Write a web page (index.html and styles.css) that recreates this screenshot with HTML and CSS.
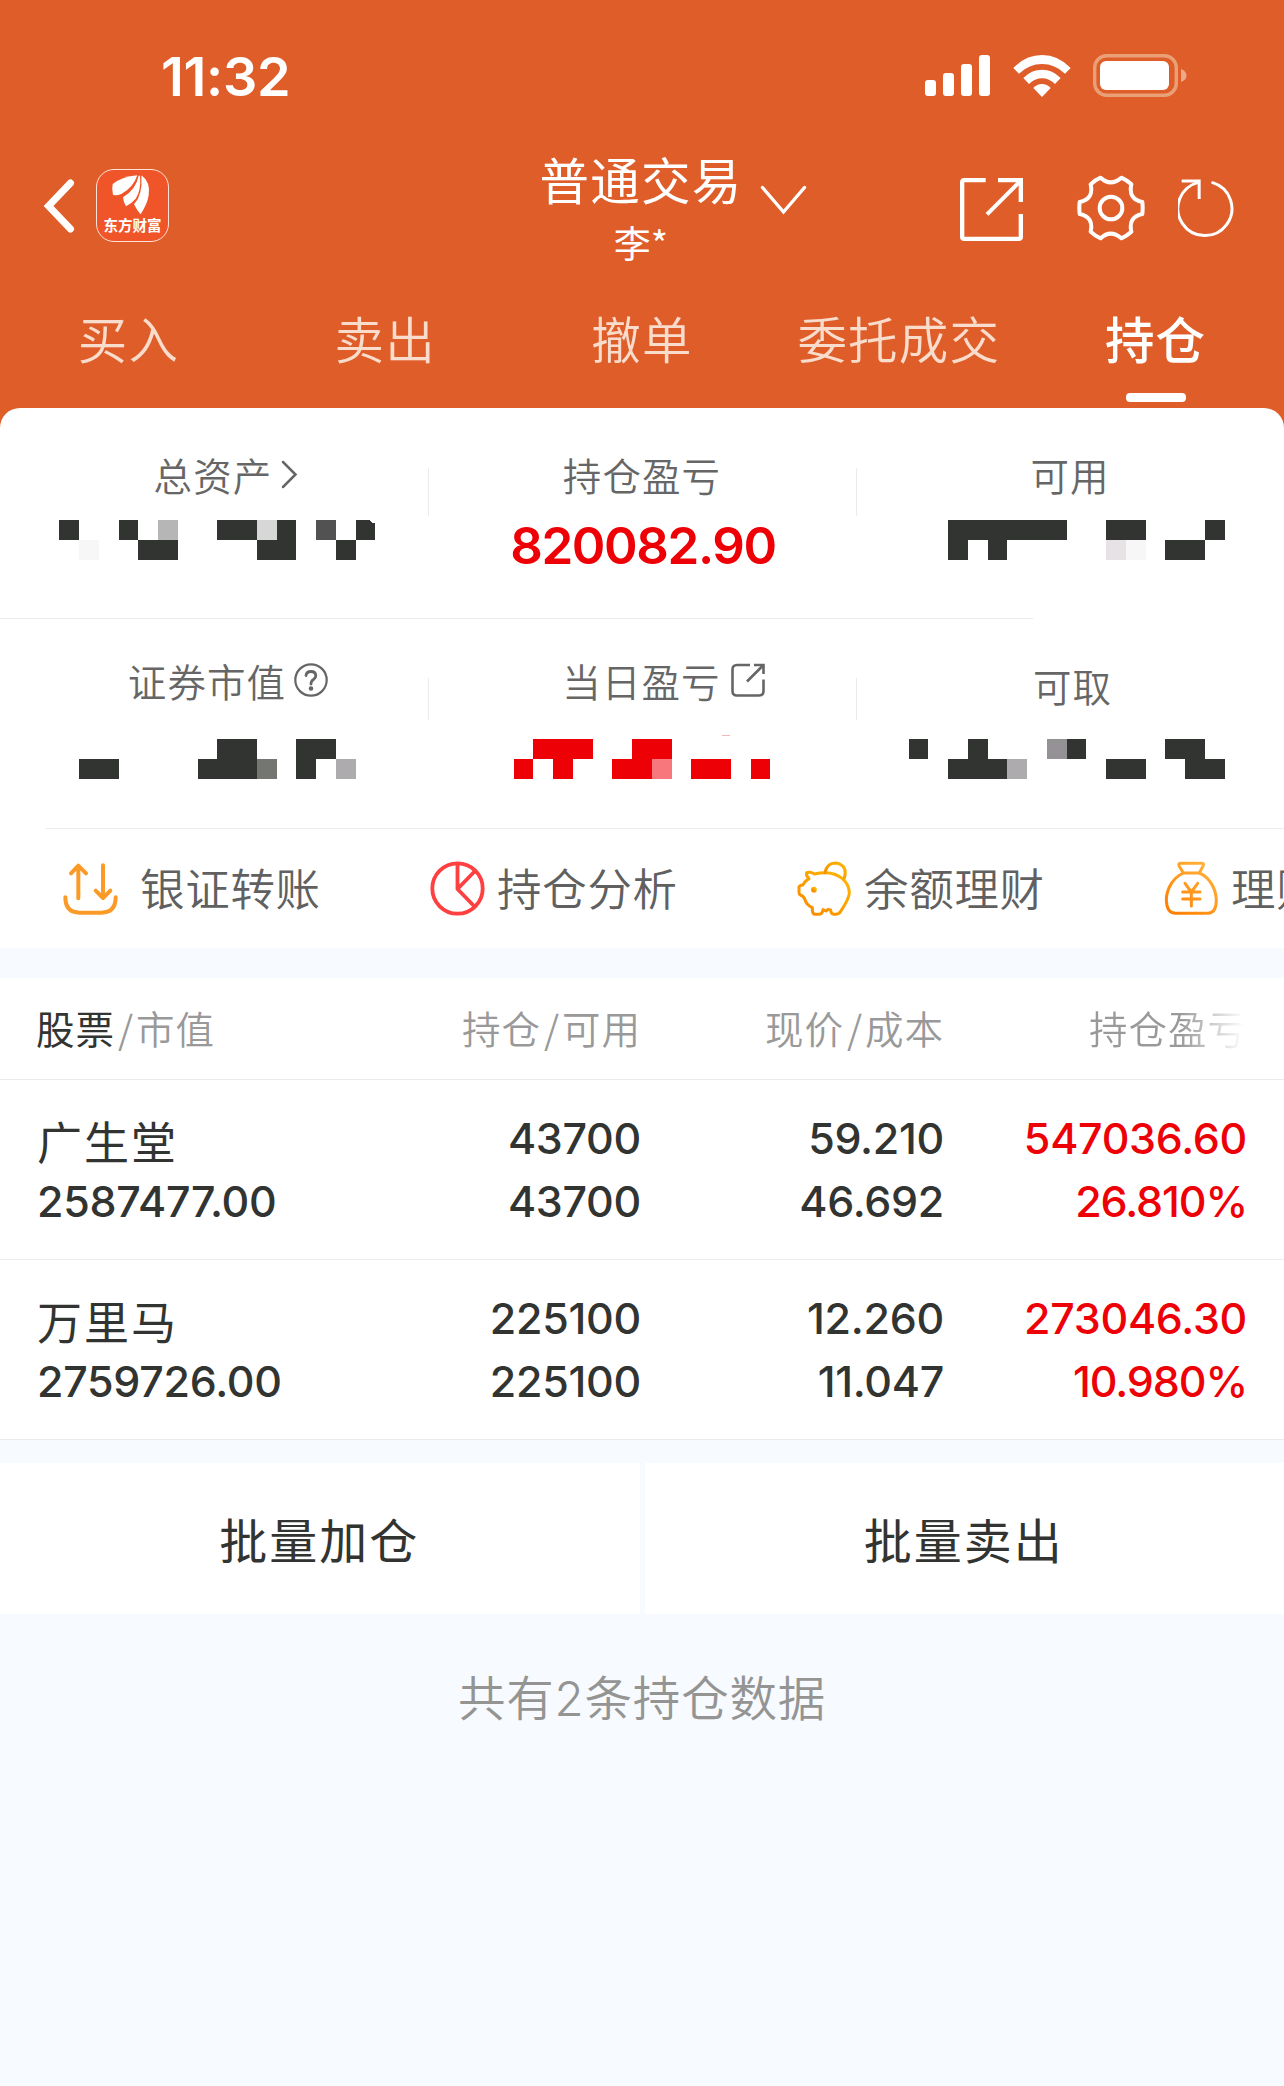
FILE: index.html
```html
<!DOCTYPE html>
<html lang="zh-CN">
<head>
	<meta charset="UTF-8">
	<meta name="viewport" content="width=device-width, initial-scale=1.0">
	<title>普通交易 - 持仓</title>
	<link rel="stylesheet" href="styles.css">
</head>
<body>

	<header class="top">
		<div class="status">
			<span class="time">11:32</span>
			<svg class="signal" width="65" height="41" viewBox="0 0 65 41" fill="#fff">
				<rect x="0" y="25" width="11" height="16" rx="3"/>
				<rect x="18" y="18" width="11" height="23" rx="3"/>
				<rect x="36" y="9" width="11" height="32" rx="3"/>
				<rect x="54" y="0" width="11" height="41" rx="3"/>
			</svg>
			<svg class="wifi" width="58" height="42" viewBox="788 42 174 126" fill="#fff">
				<path d="M789 81Q826 42 875 42Q924 42 961 81L944 98Q914 69 875 69Q836 69 806 98Z"/>
				<path d="M819 111Q843 86 875 86Q907 86 931 111L914 129Q897 112 875 112Q853 112 836 129Z"/>
				<path d="M849 141Q860 129 875 129Q890 129 901 141L875 168Z"/>
			</svg>
			<svg class="battery" width="95" height="43" viewBox="0 0 95 43">
				<rect x="1.7" y="1.7" width="81.6" height="39.6" rx="12" fill="none" stroke="#e9a077" stroke-width="3.4"/>
				<rect x="7" y="7" width="69" height="29" rx="6" fill="#fff"/>
				<path d="M88 15Q93.500 17 93.500 21.500Q93.500 26 88 28Z" fill="#eda88a"/>
			</svg>
		</div>

		<div class="nav">
			<svg class="back" width="32" height="56" viewBox="0 0 32 56" fill="none" stroke="#fff" stroke-width="7" stroke-linecap="round">
				<path d="M27.500 5L5.500 28L27.500 51" stroke-linejoin="miter"/>
			</svg>
			<div class="logo">
				<svg width="70" height="48" viewBox="4 4 210 144" fill="#fff">
					<path d="M125 20Q80 24 51 46Q48 60 52 79Q66 81 78 75Q112 58 125 20Z"/>
					<path d="M129 21Q121 62 82 86Q83 100 91 113Q108 104 120 90Q137 66 133 21Z"/>
					<path d="M139 21Q165 40 159 80Q155 106 135 137Q123 124 115 107Q142 78 137 21Z"/>
				</svg>
				<span>东方财富</span>
			</div>
			<div class="account">
				<div class="title">普通交易</div>
				<div class="user">李*</div>
			</div>
			<svg class="down" width="47" height="31" viewBox="0 0 47 31" fill="none" stroke="#fff" stroke-width="3.4" stroke-linecap="round">
				<path d="M2.500 2.500L23.500 27L44.500 2.500"/>
			</svg>
			<div class="actions">
				<svg width="63" height="63" viewBox="630 411 189 189" fill="none" stroke="#fff" stroke-width="13">
					<path d="M707 417.500H643Q636.500 417.500 636.500 424V587Q636.500 593.500 643 593.500H806Q812.500 593.500 812.500 587V519"/>
					<path d="M744 417.500H812.500V483"/>
					<path d="M711 520L810 421" stroke-width="12"/>
				</svg>
				<svg class="gear" width="68" height="66" viewBox="983 402 204 198" fill="none" stroke="#fff" stroke-width="12" stroke-linejoin="round">
					<path d="M1054 410Q1084 438 1116 410Q1132 417 1146 430Q1136 474 1179 483Q1181 501 1179 519Q1136 528 1146 572Q1132 585 1116 592Q1084 564 1054 592Q1037 585 1024 572Q1034 528 991 519Q989 501 991 483Q1034 474 1024 430Q1037 417 1054 410Z"/>
					<circle cx="1085" cy="501" r="34"/>
				</svg>
				<svg class="refresh" width="58" height="60" viewBox="1282 411 174 180" fill="none" stroke="#fff" stroke-width="9">
					<path d="M1386 425A81 81 0 1 1 1343 424" stroke-linecap="round"/>
					<path d="M1293 420H1345.500V474"/>
				</svg>
			</div>
		</div>

		<nav class="tabs">
			<a>买入</a>
			<a>卖出</a>
			<a>撤单</a>
			<a>委托成交</a>
			<a class="active">持仓</a>
		</nav>
	</header>

	<section class="summary">
		<div class="assets">
			<div class="cell">
				<div class="label first">总资产
					<svg width="17" height="29" viewBox="0 0 17 29" fill="none" stroke="#666" stroke-width="2.500" stroke-linecap="round"><path d="M2 2L14.500 14.500L2 27"/></svg>
				</div>
				<svg class="mask" width="428" height="46" viewBox="0 -6 428 46" fill="#323431" shape-rendering="crispEdges">
					<g transform="translate(59 0)">
						<path d="M0 0h20v20h-20zM60 0h19v20h-19zM79 20h40v20h-40zM158 0h40v20h-40zM218 0h19v20h-19zM198 20h39v20h-39zM277 20h20v20h-20zM297 0h13l3 3h3v17h-19z"/>
						<path fill="#f7f7f7" d="M20 20h20v20h-20z"/>
						<path fill="#b6b6b6" d="M99 0h20v20h-20z"/>
						<path fill="#d7d7d7" d="M198 0h20v20h-20z"/>
						<path fill="#525252" d="M257 0h20v20h-20z"/>
					</g>
				</svg>
			</div>
			<div class="cell">
				<div class="label">持仓盈亏</div>
				<div class="total">820082.90</div>
			</div>
			<div class="cell">
				<div class="label">可用</div>
				<svg class="mask" width="428" height="46" viewBox="0 -6 428 46" fill="#323431" shape-rendering="crispEdges">
					<g transform="translate(92 0)">
						<path d="M0 0h119v20h-119zM0 20h20v20h-20zM40 20h19v20h-19zM158 0h40v20h-40zM217 20h40v20h-40zM257 0h20v20h-20z"/>
						<path fill="#e7e2e6" d="M158 20h20v20h-20z"/>
						<path fill="#f7f7f7" d="M178 20h20v20h-20z"/>
					</g>
				</svg>
			</div>
		</div>
		<div class="line-short"></div>
		<div class="assets second">
			<div class="cell">
				<div class="label market">证券市值
					<svg width="34" height="34" viewBox="0 0 34 34" fill="none" stroke="#666" stroke-width="2.200" stroke-linecap="round">
						<circle cx="17" cy="17" r="15.700"/>
						<path d="M12 12.500Q12.500 8.500 17 8.500Q21.500 8.500 21.800 12.500Q21.800 15 19.500 16.500Q17 18 17 21" stroke-width="2.800"/>
						<circle cx="17" cy="25.500" r="1.200" fill="#666"/>
					</svg>
				</div>
				<svg class="mask" width="428" height="46" viewBox="0 -6 428 46" fill="#323431" shape-rendering="crispEdges">
					<g transform="translate(79 0)">
						<path d="M0 20h40v20h-40zM119 20h59v20h-59zM138 0h40v20h-40zM217 0h40v20h-40zM217 20h20v20h-20z"/>
						<path fill="#737671" d="M178 20h20v20h-20z"/>
						<path fill="#adabae" d="M257 20h20v20h-20z"/>
					</g>
				</svg>
			</div>
			<div class="cell">
				<div class="label today">当日盈亏
					<svg width="34" height="34" viewBox="0 0 34 34" fill="none" stroke="#666" stroke-width="2.600">
						<path d="M19 2H6Q1.500 2 1.500 6.500V28Q1.500 32.500 6 32.500H28Q32.500 32.500 32.500 28V16.500"/>
						<path d="M23 2H32.500V11M32 2.500L16 18.500"/>
					</svg>
				</div>
				<svg class="mask" width="428" height="46" viewBox="0 -6 428 46" fill="#ee0007" shape-rendering="crispEdges">
					<g transform="translate(86 0)">
						<path d="M0 20h19v20h-19zM19 0h60v20h-60zM39 20h20v20h-20zM98 20h40v20h-40zM118 0h40v20h-40zM177 20h40v20h-40zM237 20h19v20h-19z"/>
						<path fill="#f8777c" d="M138 20h20v20h-20z"/>
						<path fill="#f7b6b9" d="M208 -4h8v1h-8z"/>
					</g>
				</svg>
			</div>
			<div class="cell">
				<div class="label usable">可取</div>
				<svg class="mask" width="428" height="46" viewBox="0 -6 428 46" fill="#323431" shape-rendering="crispEdges">
					<g transform="translate(53 0)">
						<path d="M0 0h19v20h-19zM59 0h20v20h-20zM39 20h59v20h-59zM158 0h19v20h-19zM197 20h40v20h-40zM256 0h40v20h-40zM276 20h40v20h-40z"/>
						<path fill="#adabae" d="M98 20h20v20h-20z"/>
						<path fill="#949295" d="M138 0h20v20h-20z"/>
					</g>
				</svg>
			</div>
		</div>

		<div class="quick">
			<a class="transfer">
				<svg width="55" height="54" viewBox="190 61 165 162" fill="none" stroke="#fb9a27" stroke-width="12" stroke-linecap="round" stroke-linejoin="round">
					<path d="M236 170V72M214 95L236 72L259 95M310 71V169M288 147L310 169L332 147"/>
					<path d="M197 167Q197 213 240 213H305Q348 213 348 167"/>
				</svg>
				<span>银证转账</span>
			</a>
			<a>
				<svg width="55" height="55" viewBox="0 0 55 55" fill="none" stroke="#ff4040" stroke-width="3.800">
					<circle cx="27.500" cy="27.500" r="25.200"/>
					<path d="M27.500 3V28L45 46M27.500 28L45 10"/>
				</svg>
				<span>持仓分析</span>
			</a>
			<a>
				<svg width="55" height="55" viewBox="52 31 165 165" fill="none" stroke="url(#pig)" stroke-width="9" stroke-linejoin="round" stroke-linecap="round">
					<defs>
						<linearGradient id="pig" x1="1" y1="0" x2="0" y2="1"><stop offset="0" stop-color="#ffb800"/><stop offset="1" stop-color="#f98700"/></linearGradient>
					</defs>
					<path d="M81 66Q94 63 104 70Q158 58 188 84Q209 102 209 128Q207 146 183 182Q178 191 168 191H162Q154 191 153 178L146 176L139 181L130 177Q128 191 116 191H106Q97 191 98 171Q80 163 76 147Q72 136 62 133Q58 131 58 125V109Q60 104 69 103Q75 91 88 84Q78 75 81 66Z"/>
					<path d="M136 66Q142 37 167 37Q187 38 195 55Q199 67 194 82"/>
					<circle cx="103" cy="117" r="4" fill="#fa9700"/>
				</svg>
				<span>余额理财</span>
			</a>
			<a>
				<svg width="55" height="55" viewBox="1152 31 165 165" fill="none" stroke="url(#bag)" stroke-width="9" stroke-linejoin="round" stroke-linecap="round">
					<defs>
						<linearGradient id="bag" gradientUnits="userSpaceOnUse" x1="1290" y1="38" x2="1170" y2="190"><stop offset="0" stop-color="#ffb43c"/><stop offset="1" stop-color="#ff7d00"/></linearGradient>
					</defs>
					<path d="M1202 38H1265Q1272 38 1270 44L1258 67H1210L1197 45Q1195 38 1202 38Z"/>
					<path d="M1210 67C1178 82 1159 116 1159 148Q1160 188 1187 188H1284Q1309 186 1309 148C1308 116 1290 80 1258 67"/>
					<path d="M1215 98L1234 124L1253 98M1208 124H1260M1208 145H1260M1234 124V166"/>
				</svg>
				<span>理财</span>
			</a>
		</div>
	</section>

	<section class="holdings">
		<div class="row head">
			<div><b>股票</b><i>/</i>市值</div>
			<div>持仓<i>/</i>可用</div>
			<div>现价<i>/</i>成本</div>
			<div class="fade">持仓盈亏</div>
		</div>
		<div class="row">
			<div><p class="name">广生堂</p><p>2587477.00</p></div>
			<div><p>43700</p><p>43700</p></div>
			<div><p>59.210</p><p>46.692</p></div>
			<div class="red"><p>547036.60</p><p class="rate">26.810%</p></div>
		</div>
		<div class="row">
			<div><p class="name">万里马</p><p>2759726.00</p></div>
			<div><p>225100</p><p>225100</p></div>
			<div><p>12.260</p><p>11.047</p></div>
			<div class="red"><p>273046.30</p><p class="rate">10.980%</p></div>
		</div>
	</section>

	<div class="batch">
		<button>批量加仓</button>
		<button>批量卖出</button>
	</div>

	<p class="count">共有<span>2</span>条持仓数据</p>

</body>
</html>
```
FILE: styles.css
```css
*{
	box-sizing: border-box;
}

body{
	margin: 0;
	background: #f7faff;
	color: #323431;
	font-family: "Noto Sans CJK SC", sans-serif;
	font-weight: 350;
	overflow-x: hidden;
}

p{
	margin: 0;
}

svg{
	display: block;
	flex: none;
}

/* header */

.top{
	height: 428px;
	background: #df5d29;
	color: #fff;
}

.status{
	height: 151px;
	padding: 0 96px 0 161px;
	display: flex;
	align-items: center;
}

.time{
	flex: 1;
	padding-top: 1px;
	font-family: Inter, sans-serif;
	font-size: 54px;
	font-weight: 600;
	letter-spacing: -0.3px;
}

.wifi{
	margin: 0 22px 0 23px;
}

.nav{
	height: 131px;
	padding: 0 48px 0 43px;
	display: flex;
	align-items: flex-start;
}

.back{
	margin-top: 27px;
}

.logo{
	width: 73px;
	height: 73px;
	margin: 18px 371px 0 21px;
	border: 1.500px solid #fde3d8;
	border-radius: 18px;
	background: #f0552a;
}

.logo span{
	display: block;
	margin: -1px -2px 0;
	font-size: 14.500px;
	font-weight: 700;
	line-height: 16px;
	text-align: center;
	white-space: nowrap;
}

.account{
	width: 202px;
	display: flex;
	flex-flow: column;
	align-items: center;
}

.title{
	font-size: 49.500px;
	font-weight: 400;
	letter-spacing: 1.200px;
	line-height: 56px;
	white-space: nowrap;
}

.user{
	margin-top: 12px;
	font-size: 37px;
	font-weight: 400;
	line-height: 46px;
}

.down{
	margin: 34px 0 0 18px;
}

.actions{
	margin: 24px 0 0 auto;
	display: flex;
	align-items: center;
}

.gear{
	margin: 0 33px 3px 54px;
}

.refresh{
	margin-bottom: 3px;
}

.tabs{
	display: grid;
	grid-template-columns: repeat(5, 1fr);
}

.tabs a{
	height: 120px;
	display: flex;
	flex-flow: column;
	align-items: center;
	color: #f9dccb;
	font-size: 49.500px;
	letter-spacing: 1.200px;
	line-height: 112px;
}

.tabs .active{
	color: #fff;
	font-weight: 500;
}

.active::after{
	content: "";
	width: 60px;
	height: 9px;
	margin-top: -1px;
	border-radius: 4px;
	background: #fff;
}

/* account summary */

.summary{
	height: 540px;
	margin-top: -20px;
	border-radius: 20px 20px 0 0;
	background: #fff;
	overflow: hidden;
}

.assets{
	height: 210px;
	padding-top: 42px;
	display: grid;
	grid-template-columns: repeat(3, 428px);
}

.second{
	height: 209px;
	padding-top: 37px;
}

.cell{
	display: flex;
	flex-flow: column;
	align-items: center;
}

.cell + .cell{
	background: linear-gradient(#ebebeb, #ebebeb) 0 18px / 1px 48px no-repeat;
}

.second .cell + .cell{
	background-position: 0 22px;
	background-size: 1px 42px;
}

.label{
	height: 48px;
	display: flex;
	align-items: center;
	color: #666;
	font-size: 38.500px;
	letter-spacing: 1.100px;
	line-height: 48px;
}

.first{
	padding-left: 24px;
	gap: 9px;
}

.market{
	padding-left: 28px;
	gap: 8px;
}

.today{
	padding-left: 43px;
	gap: 10px;
}

.usable{
	padding: 10px 0 0 5px;
}

.mask{
	margin-top: 16px;
}

.second .mask{
	margin-top: 29px;
}

.total{
	margin-top: 18px;
	padding-left: 2px;
	color: #ee0007;
	font-family: Inter, sans-serif;
	font-size: 51px;
	font-weight: 600;
	letter-spacing: -1.400px;
	line-height: 60px;
}

.line-short{
	width: 1033px;
	height: 1px;
	background: #ebebeb;
}

.quick{
	height: 120px;
	margin-left: 46px;
	padding-left: 17px;
	border-top: 1px solid #ebebeb;
	display: flex;
	align-items: center;
}

.quick a{
	flex: 0 0 367px;
	display: flex;
	align-items: center;
	gap: 12px;
	color: #606060;
	font-size: 44.500px;
	letter-spacing: 0.700px;
	line-height: 60px;
	white-space: nowrap;
}

.quick span{
	margin-top: -3px;
}

.quick .transfer{
	gap: 22px;
}

/* holdings table */

.holdings{
	margin-top: 30px;
	background: #fff;
}

.row{
	height: 180px;
	padding: 27px 37px 0;
	border-bottom: 1px solid #ebebeb;
	display: grid;
	grid-template-columns: 301px 303px 303px 303px;
	text-align: right;
}

.row > div:first-child{
	text-align: left;
}

.row p{
	height: 63px;
	font-family: Inter, sans-serif;
	font-size: 43px;
	font-weight: 500;
	letter-spacing: -0.300px;
	line-height: 63px;
}

.row .name{
	padding-top: 2px;
	font-family: "Noto Sans CJK SC", sans-serif;
	font-size: 45px;
	font-weight: 400;
	letter-spacing: 2px;
}

.row .red{
	color: #ee0007;
}

.row .rate{
	letter-spacing: -1.100px;
}

.head{
	height: 102px;
	padding-top: 0;
	color: #999;
	font-size: 38.500px;
	letter-spacing: 1px;
	line-height: 98px;
}

.head b{
	margin-left: -1px;
	color: #323431;
	font-weight: 400;
}

.head i{
	padding: 0 2px 0 3px;
	font-style: normal;
}

.fade{
	background: linear-gradient(90deg, #999 78%, #fff 99%);
	background-clip: text;
	-webkit-background-clip: text;
	color: transparent;
}

/* footer */

.batch{
	height: 151px;
	margin-top: 23px;
	display: flex;
	gap: 5px;
}

.batch button{
	flex: 1;
	padding: 0 1px 2px 0;
	border: 0;
	background: #fff;
	color: #323431;
	font: 400 48px "Noto Sans CJK SC", sans-serif;
	letter-spacing: 2px;
}

.count{
	margin-top: 48px;
	color: #949593;
	font-size: 47.500px;
	letter-spacing: 0.800px;
	line-height: 68px;
	text-align: center;
}

.count span{
	font-family: Inter, sans-serif;
}
```
